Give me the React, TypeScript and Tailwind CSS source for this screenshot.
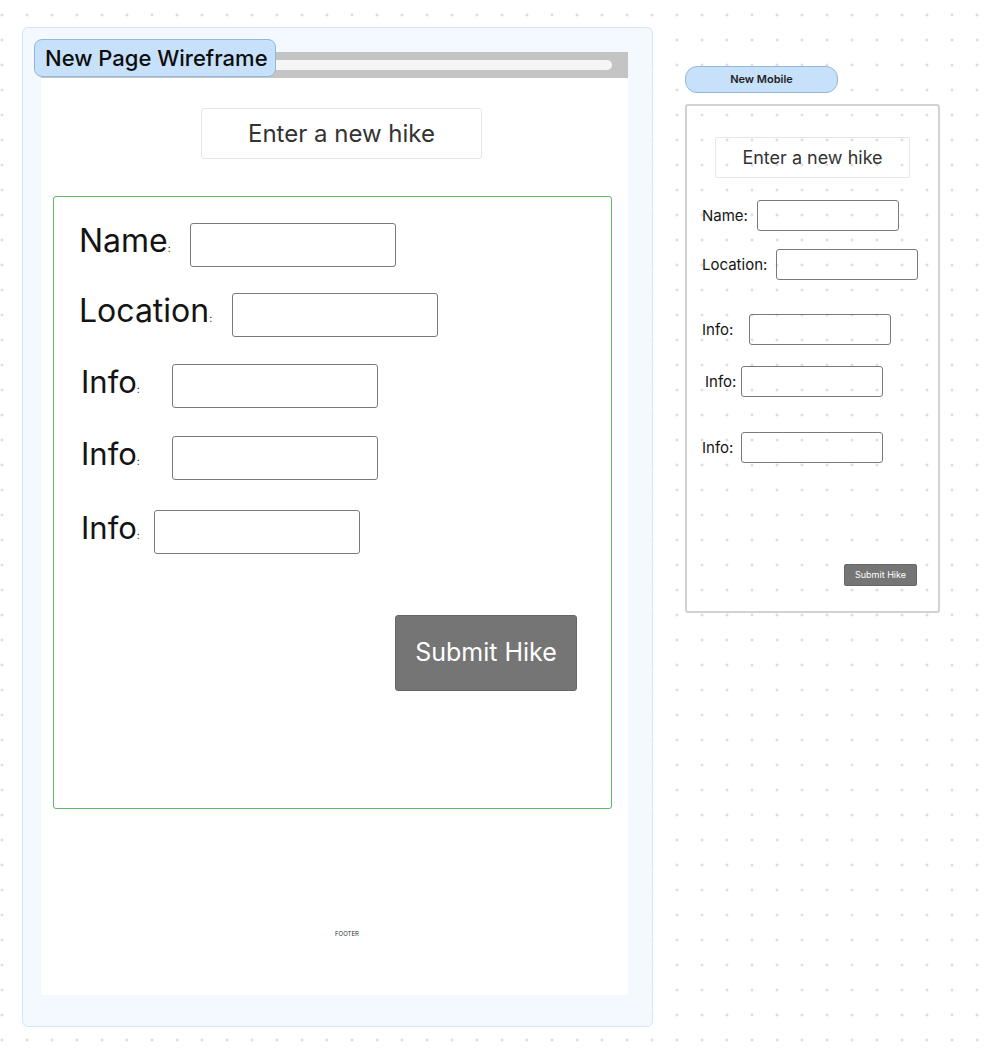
const desktopRows = [
  { label: "Name", labelW: "w-[111px]", pl: "pl-[25px]", mt: "mt-[26px]" },
  { label: "Location", labelW: "w-[153px]", pl: "pl-[25px]", mt: "mt-[26px]" },
  { label: "Info", labelW: "w-[91px]", pl: "pl-[27px]", mt: "mt-[27px]" },
  { label: "Info", labelW: "w-[91px]", pl: "pl-[27px]", mt: "mt-[28px]" },
  { label: "Info", labelW: "w-[73px]", pl: "pl-[27px]", mt: "mt-[30px]" },
];

const mobileRows = [
  { label: "Name:", labelW: "w-[55px]", pl: "pl-[15px]", mt: "mt-[22px]" },
  { label: "Location:", labelW: "w-[74px]", pl: "pl-[15px]", mt: "mt-[18px]" },
  { label: "Info:", labelW: "w-[47px]", pl: "pl-[15px]", mt: "mt-[34px]" },
  { label: "Info:", labelW: "w-[36px]", pl: "pl-[18px]", mt: "mt-[21px]" },
  { label: "Info:", labelW: "w-[39px]", pl: "pl-[15px]", mt: "mt-[35px]" },
];

function DesktopFrame() {
  return (
    <div className="absolute left-[22px] top-[27px] h-[1000px] w-[631px] rounded-md border border-[#d3e5f7] bg-[#f4f9ff] pl-[18px] pt-[24px]">
      <div className="flex h-[943px] w-[587px] flex-col bg-white">
        {/* browser bar */}
        <div className="flex h-[26px] items-center bg-[#c4c4c4] px-4">
          <div className="h-[10px] w-full rounded-full bg-[#f5f5f5]" />
        </div>

        <div className="ml-[160px] mt-[30px] flex h-[51px] w-[281px] items-center justify-center rounded-[3px] border-[1.5px] border-[#e6e6e6] text-[24px] text-[#333]">
          Enter a new hike
        </div>

        {/* form */}
        <div className="ml-[12px] mt-[37px] flex h-[613px] w-[559px] flex-col rounded-[3px] border-[1.5px] border-[#5cb865]">
          {desktopRows.map((row, i) => (
            <div key={i} className={`flex h-[44px] items-center ${row.pl} ${row.mt}`}>
              <div className={`${row.labelW} mb-[2px] shrink-0 whitespace-nowrap leading-[36px] text-[#141414]`}>
                <span className={row.label === "Info" ? "text-[31px]" : "text-[32px]"}>{row.label}</span>
                <span className="text-[10px]">:</span>
              </div>
              <div className="h-[44px] w-[206px] rounded-[3px] border-[1.5px] border-[#7a7a7a]" />
            </div>
          ))}

          <div className="ml-[341px] mt-[61px] flex h-[76px] w-[182px] items-center justify-center rounded-[3px] border border-[#666] bg-[#757575] text-[25px] text-white">
            Submit Hike
          </div>
        </div>

        <div className="ml-[294px] mt-[120px] text-[6px] text-[#333]">FOOTER</div>
      </div>
    </div>
  );
}

function MobileFrame() {
  return (
    <div className="absolute left-[685px] top-[104px] flex h-[509px] w-[255px] flex-col rounded-[3px] border-2 border-[#d2d2d2]">
      <div className="ml-[28px] mt-[31px] flex h-[41px] w-[195px] items-center justify-center rounded-[2px] border-[1.5px] border-[#e6e6e6] text-[18px] text-[#333]">
        Enter a new hike
      </div>

      {mobileRows.map((row, i) => (
        <div key={i} className={`flex h-[31px] items-center ${row.pl} ${row.mt}`}>
          <div className={`${row.labelW} mt-[1px] shrink-0 whitespace-nowrap text-[15px] text-[#141414]`}>
            {row.label}
          </div>
          <div className="h-[31px] w-[142px] rounded-[3px] border-[1.5px] border-[#7a7a7a]" />
        </div>
      ))}

      <div className="ml-[157px] mt-[101px] flex h-[22px] w-[73px] items-center justify-center rounded-[2px] border border-[#666] bg-[#757575] text-[9px] text-white">
        Submit Hike
      </div>
    </div>
  );
}

export default function App() {
  return (
    <div className="relative h-[1058px] w-[984px] overflow-hidden bg-white bg-[radial-gradient(circle,#d2d2d2_1px,transparent_1.4px)] bg-[length:25px_25px] bg-[position:-10.5px_2.5px] font-['Inter',sans-serif]">
      <DesktopFrame />

      {/* frame label */}
      <div className="absolute left-[34px] top-[39px] flex h-[38px] w-[242px] items-center rounded-lg border-[1.5px] border-[#94b8db] bg-[#c6e1f9] pl-[10px] text-[22px] font-medium text-[#0d0d0d]">
        New Page Wireframe
      </div>

      <div className="absolute left-[685px] top-[66px] flex h-[27px] w-[153px] items-center justify-center rounded-[12px] border-[1.5px] border-[#94b8db] bg-[#c6e1f9] text-[11px] font-semibold text-[#222]">
        New Mobile
      </div>

      <MobileFrame />
    </div>
  );
}
